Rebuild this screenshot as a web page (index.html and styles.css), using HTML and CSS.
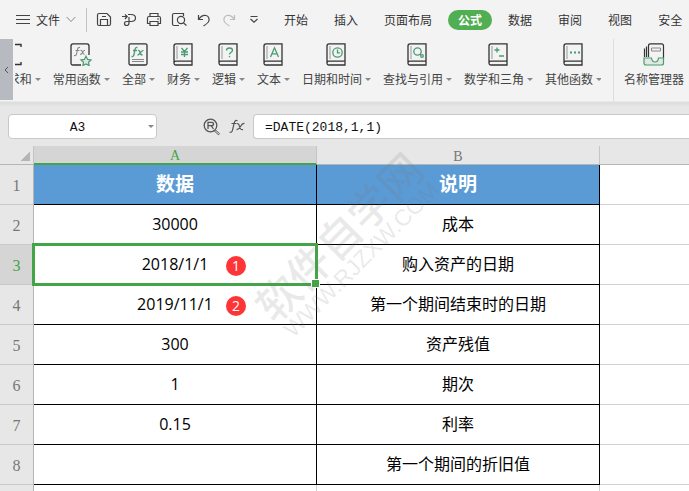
FILE: index.html
```
<!DOCTYPE html>
<html lang="zh-CN">
<head>
    <meta charset="UTF-8">
    <meta name="viewport" content="width=device-width, initial-scale=1.0">
    <title>公式</title>
    <link rel="stylesheet" href="styles.css">
</head>
<body>
    <!-- Shared book outline used by the function buttons -->
    <svg class="defs" width="0" height="0" aria-hidden="true">
        <symbol id="book" viewBox="0 0 20 23">
            <path d="M1 20V3Q1 .8 3 .8H19V22H3Q1 22 1 20Q1 18.2 3 18.2H19" fill="none" stroke="#333" stroke-width="1.3"/>
            <path d="M4 3V16" stroke="#999" stroke-width="1"/>
        </symbol>
    </svg>

    <header class="menu-bar">
        <button class="file-menu">
            <svg width="14" height="12" viewBox="0 0 14 12"><path d="M0 1.5H14M0 5.5H14M0 9.5H14" stroke="#444"/></svg>
            <span>文件</span>
            <svg width="10" height="7" viewBox="0 0 10 7"><path d="M.7 1L5 5.5L9.3 1" fill="none" stroke="#888"/></svg>
        </button>
        <div class="quick-tools">
            <button aria-label="保存"><svg width="16" height="16" viewBox="0 0 16 16"><path d="M3 1.5H11L14.5 5V12Q14.5 13.5 13 13.5H3Q1.5 13.5 1.5 12V3Q1.5 1.5 3 1.5ZM4.5 13V7.5H11.5V13M6 4.5H10"/></svg></button>
            <button aria-label="输出"><svg width="16" height="16" viewBox="0 0 16 16"><path d="M1 4.5H6M4 2.5L6.2 4.5L4 7M7 2.5H10Q14.5 2.5 14.5 6Q14.5 9.5 10 9.5H6Q3.500 9.500 3.500 11.500Q3.500 13.500 5.500 13.500Q8 13.500 8 11V5"/></svg></button>
            <button aria-label="打印"><svg width="16" height="16" viewBox="0 0 16 16"><path d="M4 4.5V1.5H12V4.5M4 11.5H1.5V6Q1.5 4.5 3 4.5H13Q14.5 4.5 14.5 6V11.5H12M4 9.5H12V13.5H4ZM11 7H13"/></svg></button>
            <button aria-label="打印预览"><svg width="16" height="16" viewBox="0 0 16 16"><path d="M12.5 4V1.5H3Q1.5 1.5 1.5 3V12Q1.5 13.5 3 13.5H8M12.5 11L15.5 13.500"/><circle cx="10" cy="8" r="3.600"/></svg></button>
            <button aria-label="撤销"><svg width="16" height="16" viewBox="0 0 16 16"><path d="M2.5 3V7.5H7M2.5 7.5Q6 2.5 10 3.5Q13.5 4.5 13 8.5Q12.5 11 7.5 14"/></svg></button>
            <button class="disabled" aria-label="恢复"><svg width="16" height="16" viewBox="0 0 16 16"><path d="M13.5 3V7.5H9M13.5 7.5Q10 2.5 6 3.5Q2.5 4.5 3 8.5Q3.5 11 8.5 14"/></svg></button>
            <button aria-label="自定义"><svg width="16" height="16" viewBox="0 0 16 16"><path d="M4.5 4.5H11.5M4.5 7L8 10.3L11.5 7"/></svg></button>
        </div>
        <nav class="tabs">
            <button>开始</button>
            <button>插入</button>
            <button>页面布局</button>
            <button class="active">公式</button>
            <button>数据</button>
            <button>审阅</button>
            <button>视图</button>
            <button>安全</button>
        </nav>
    </header>

    <section class="ribbon">
        <button class="scroll-left" aria-label="向左滚动">
            <svg width="5" height="8" viewBox="0 0 5 8"><path d="M4 1L1 4L4 7" fill="none" stroke="#555"/></svg>
        </button>
        <div class="functions">
            <button>
                <svg width="20" height="23" viewBox="0 0 20 23"><path d="M7 4V1.5H0M7 19V21.5H0" fill="none" stroke="#333" stroke-width="1.4"/></svg>
                <span class="label drop">求和</span>
            </button>
            <button>
                <svg width="22" height="23" viewBox="0 0 22 23">
                    <path d="M11 22H3Q1 22 1 20V3Q1 .8 3 .8H17Q19 .8 19 3V12" fill="none" stroke="#333" stroke-width="1.3"/>
                    <path d="M10 4.5Q8 4 7.5 6.5L6.5 11Q6 13 4 12.5M5.5 7.5H9.5M10.5 7.5Q12 7 12.5 9T14.5 11.5M15 7.3Q13.5 7.5 12.5 9.5T10 11.5" fill="none" stroke="#888" stroke-width="1.1"/>
                    <path d="M16 13.2L17.6 16.4L21.1 16.9L18.5 19.3L19.2 22.6L16 21L12.8 22.6L13.5 19.3L10.9 16.9L14.4 16.4Z" fill="#dce8df" stroke="#4b9b73" stroke-width="1.2"/>
                </svg>
                <span class="label drop">常用函数</span>
            </button>
            <button>
                <svg width="20" height="23" viewBox="0 0 20 23">
                    <rect x="1" y=".8" width="18" height="21.2" rx="1.5" fill="none" stroke="#333" stroke-width="1.3"/>
                    <path d="M9.5 4.5Q7.5 4 7 6.5L6 11.5Q5.5 14 3.5 13.5M5 7.5H9M10 7.5Q11.5 7 12 9.5T14.5 12M15.5 7.3Q14 7.5 12.5 9.7T9.5 12" fill="none" stroke="#4b9b73" stroke-width="1.3"/>
                    <path d="M4 16.5H16M4 18.5H16" stroke="#888"/>
                </svg>
                <span class="label drop">全部</span>
            </button>
            <button>
                <svg width="20" height="23" viewBox="0 0 20 23"><use href="#book"/><path class="mark" d="M8.5 5L11.5 8.5L14.5 5M8 9H15M8 11.5H15M11.5 8.5V14"/></svg>
                <span class="label drop">财务</span>
            </button>
            <button>
                <svg width="20" height="23" viewBox="0 0 20 23"><use href="#book"/><path class="mark" d="M8.5 7.5Q8.5 5 11.5 5Q14.5 5 14.5 7.3Q14.5 8.5 13 9.3Q11.5 10 11.5 11.5M11.5 13V14.3"/></svg>
                <span class="label drop">逻辑</span>
            </button>
            <button>
                <svg width="20" height="23" viewBox="0 0 20 23"><use href="#book"/><path class="mark" d="M7.5 14L11.5 4.8L15.5 14M9 10.8H14"/></svg>
                <span class="label drop">文本</span>
            </button>
            <button>
                <svg width="20" height="23" viewBox="0 0 20 23"><use href="#book"/><circle class="mark" cx="11.5" cy="9.5" r="4.7"/><path class="mark" d="M11.5 6.5V9.8H14"/></svg>
                <span class="label drop">日期和时间</span>
            </button>
            <button>
                <svg width="20" height="23" viewBox="0 0 20 23"><use href="#book"/><circle class="mark" cx="10.5" cy="8.5" r="3.7"/><path class="mark" d="M13 11L14 12"/><circle class="mark" cx="15" cy="13" r="1.3"/></svg>
                <span class="label drop">查找与引用</span>
            </button>
            <button>
                <svg width="20" height="23" viewBox="0 0 20 23"><use href="#book"/><path class="mark" d="M6.5 7H11.5M9 4.5V9.5M11 13H16"/></svg>
                <span class="label drop">数学和三角</span>
            </button>
            <button>
                <svg width="20" height="23" viewBox="0 0 20 23"><use href="#book"/><path d="M7 9.5H9M11 9.5H13M15 9.5H17" stroke="#4b9b73" stroke-width="2"/></svg>
                <span class="label drop">其他函数</span>
            </button>
        </div>
        <div class="names">
            <button>
                <svg width="22" height="23" viewBox="0 0 22 23">
                    <path d="M1.5 14V5.5M3.5 14V3.5M5.5 14V2.5Q5.5 .8 7.5 .8H18.5Q20.5 .8 20.5 2.8V15" fill="none" stroke="#333" stroke-width="1.2"/>
                    <path d="M8.5 5H17.5V8H8.5Z" fill="none" stroke="#888"/>
                    <path d="M1 15H8.5Q9 19 12 19Q15 19 15.5 15H20.5V20Q20.5 22 18.5 22H3Q1 22 1 20Z" fill="#e0e9e3" stroke="#4b9b73" stroke-width="1.2"/>
                </svg>
                <span class="label">名称管理器</span>
            </button>
        </div>
    </section>

    <section class="formula-bar">
        <div class="name-box">
            <input type="text" value="A3" aria-label="名称框">
            <button aria-label="选择名称"></button>
        </div>
        <button class="tool find" aria-label="查找">
            <svg width="18" height="18" viewBox="0 0 18 18" fill="none" stroke="#555">
                <circle cx="7.5" cy="7.5" r="6.3" stroke-width="1.3"/>
                <path d="M5 11V4.3H8.5Q10.5 4.3 10.5 6Q10.5 7.7 8.5 7.7H5M8.3 7.8L10.5 11" stroke-width="1.3"/>
                <path d="M12 11.5L16.5 15.7L15.3 16.8L11 12.5"/>
            </svg>
        </button>
        <button class="tool" aria-label="插入函数">
            <svg width="18" height="18" viewBox="0 0 18 18" fill="none" stroke="#555" stroke-width="1.2">
                <path d="M9.5 2.8Q7 1.5 6.2 5L4.5 12Q4 15 1.5 14M3.5 5.5H8.5M9 5.7Q10.8 5 11.5 8.5T15 11.7M16.5 5.5Q14.5 5 12.5 8.5T8.5 11.7"/>
            </svg>
        </button>
        <input class="formula" type="text" value="=DATE(2018,1,1)" aria-label="编辑栏">
    </section>

    <main class="sheet">
        <table>
            <colgroup>
                <col class="col-index">
                <col class="col-data">
                <col class="col-data">
                <col>
            </colgroup>
            <thead>
                <tr><th class="corner"></th><th class="selected">A</th><th>B</th><th></th></tr>
            </thead>
            <tbody>
                <tr class="title"><th>1</th><td>数据</td><td>说明</td><td></td></tr>
                <tr><th>2</th><td>30000</td><td>成本</td><td></td></tr>
                <tr><th class="selected">3</th><td class="current">2018/1/1<span class="badge">1</span></td><td>购入资产的日期</td><td></td></tr>
                <tr><th>4</th><td>2019/11/1<span class="badge">2</span></td><td>第一个期间结束时的日期</td><td></td></tr>
                <tr><th>5</th><td>300</td><td>资产残值</td><td></td></tr>
                <tr><th>6</th><td>1</td><td>期次</td><td></td></tr>
                <tr><th>7</th><td>0.15</td><td>利率</td><td></td></tr>
                <tr><th>8</th><td></td><td>第一个期间的折旧值</td><td></td></tr>
                <tr class="blank"><th></th><td></td><td></td><td></td></tr>
            </tbody>
        </table>
        <div class="watermark">
            <div class="site-name">软件自学网</div>
            <div class="site-url">WWW.RJZXW.COM</div>
        </div>
    </main>
</body>
</html>
```

FILE: styles.css
```
* {
    margin: 0;
    padding: 0;
    box-sizing: border-box;
}

body {
    height: 100vh;
    overflow: hidden;
    display: flex;
    flex-direction: column;
    font-family: "Noto Sans CJK SC", sans-serif;
    font-size: 12px;
    line-height: 16px;
    color: #333;
    background: #fff;
}

button {
    border: none;
    background: none;
    font: inherit;
    color: inherit;
    white-space: nowrap;
    flex-shrink: 0;
}

input {
    border: none;
    outline: none;
    background: none;
    min-width: 0;
}

svg {
    display: block;
}

.defs {
    position: absolute;
}

/* Menu bar */
.menu-bar {
    display: flex;
    align-items: center;
    height: 39px;
    padding-left: 16px;
    background: #f3f3f3;
    flex-shrink: 0;
}

.file-menu {
    display: flex;
    align-items: center;
    gap: 6px;
    height: 24px;
    padding-right: 10px;
    border-right: 1px solid #c4c4c4;
}

.quick-tools {
    display: flex;
    gap: 9px;
    padding-left: 9px;
}

.quick-tools svg {
    fill: none;
    stroke: #444;
    stroke-width: 1.2;
}

.quick-tools .disabled svg {
    stroke: #bbb;
}

.tabs {
    display: flex;
    gap: 6px;
    margin-left: 12px;
}

.tabs button {
    height: 20px;
    padding: 0 10px;
    border-radius: 10px;
}

.tabs .active {
    background: #51ae52;
    color: #fff;
    font-weight: bold;
}

/* Ribbon */
.ribbon {
    display: flex;
    height: 63px;
    background: #f3f3f3;
    border-bottom: 1px solid #e9e9e9;
    flex-shrink: 0;
}

.scroll-left {
    display: flex;
    align-items: center;
    justify-content: center;
    width: 13px;
    height: 61px;
    margin-right: 2px;
    background: #b7bac1;
}

.functions {
    display: flex;
    justify-content: flex-end;
    gap: 13px;
    width: 586px;
    padding-top: 4px;
    overflow: hidden;
    flex-shrink: 0;
}

.functions button,
.names button {
    display: flex;
    flex-direction: column;
    align-items: center;
    gap: 5px;
}

.mark {
    fill: none;
    stroke: #4b9b73;
    stroke-width: 1.3;
}

.label {
    display: flex;
    align-items: center;
    gap: 3px;
    color: #444;
}

.drop::after,
.name-box button::after {
    content: "";
    border: solid transparent;
    border-width: 3px 3px 0;
    border-top-color: #888;
}

.drop::after {
    margin-right: -1px;
}

.names {
    margin-left: 12px;
    padding: 4px 0 0 10px;
    border-left: 1px solid #dedede;
}

/* Formula bar */
.formula-bar {
    display: flex;
    align-items: center;
    height: 44px;
    padding: 5px 0 0 8px;
    background: linear-gradient(#dcdcdc, #e7e7e7 5px);
    flex-shrink: 0;
}

.name-box,
.formula {
    height: 25px;
    border: 1px solid #c9c9c9;
    background: #fff;
}

.name-box {
    display: flex;
    width: 149px;
    border-radius: 4px;
}

.name-box input {
    flex: 1;
    text-align: center;
}

.name-box button {
    display: flex;
    align-items: center;
    justify-content: center;
    width: 10px;
}

.name-box input,
.formula {
    padding-top: 2px;
    font-family: "Liberation Mono", monospace;
    font-size: 13px;
    color: #111;
}

.find {
    margin-left: 46px;
}

.tool + .tool {
    margin-left: 7px;
}

.formula {
    flex: 1;
    margin-left: 7px;
    padding-left: 11px;
    border-right: none;
    border-radius: 4px 0 0 4px;
}

/* Sheet */
.sheet {
    position: relative;
    flex: 1;
    overflow: hidden;
}

table {
    width: 100%;
    table-layout: fixed;
    border-spacing: 0;
}

.col-index {
    width: 34px;
}

.col-data {
    width: 283px;
}

th {
    background: #e7e7e7;
    color: #777;
    font-family: "Liberation Serif", serif;
    font-size: 16px;
    font-weight: normal;
}

thead th {
    height: 19px;
    padding-top: 3px;
    font-size: 14px;
    line-height: 14px;
    border-bottom: 1px solid #b5b5b5;
    border-right: 1px solid #c4c4c4;
}

thead th:last-child {
    border-right: none;
}

thead .corner {
    background: linear-gradient(135deg, transparent 50%, #b5b5b5 50%) 20px 5px / 10px 10px no-repeat #e7e7e7;
}

th.selected {
    background: #d5d5d5;
    color: #43a547;
}

thead .selected {
    border-bottom: 2px solid #43a547;
}

tbody th {
    padding-top: 2px;
    border-right: 1px solid #b5b5b5;
    border-bottom: 1px solid #c9c9c9;
}

td {
    position: relative;
    height: 40px;
    padding-bottom: 2px;
    border-right: 1px solid #000;
    border-bottom: 1px solid #000;
    font-family: "Open Sans", "Noto Sans CJK SC", sans-serif;
    font-size: 16px;
    line-height: 24px;
    text-align: center;
    color: #000;
}

td:last-child {
    border-right: none;
    border-bottom-color: #d0d0d0;
}

.title td:not(:last-child) {
    background: #5b9bd5;
    color: #fff;
    font-size: 19px;
    font-weight: bold;
}

.blank td {
    border-color: #d0d0d0;
}

.current::before {
    content: "";
    position: absolute;
    inset: -2px;
    z-index: 1;
    border: 3px solid #43a547;
}

.current::after {
    content: "";
    position: absolute;
    right: -4px;
    bottom: -4px;
    z-index: 2;
    width: 7px;
    height: 7px;
    border: 1px solid #fff;
    background: #43a547;
}

.badge {
    position: absolute;
    top: 11px;
    left: 192px;
    width: 20px;
    height: 20px;
    border-radius: 50%;
    background: #fd3537;
    color: #fff;
    font-size: 14px;
    line-height: 20px;
}

.watermark {
    position: absolute;
    top: 63px;
    left: 230px;
    width: 230px;
    color: rgba(120, 120, 120, 0.16);
    font-weight: 500;
    text-align: center;
    white-space: nowrap;
    transform: rotate(-45deg);
    pointer-events: none;
    z-index: 3;
}

.site-name {
    font-size: 43px;
    line-height: 46px;
}

.site-url {
    font-family: "Liberation Sans", sans-serif;
    font-size: 23px;
    line-height: 22px;
}
```
